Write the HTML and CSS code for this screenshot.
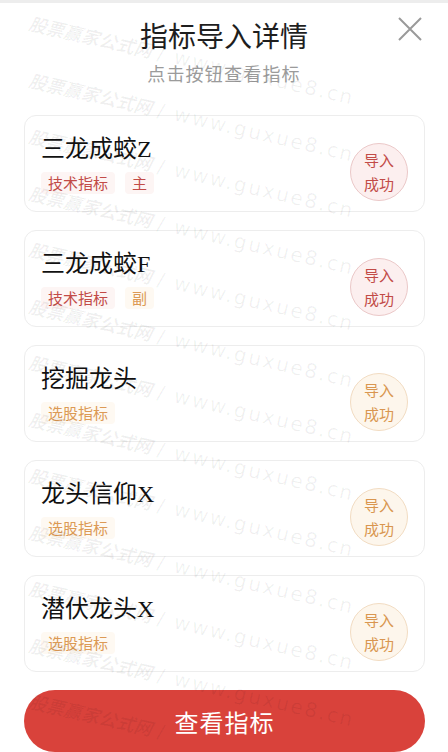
FILE: index.html
```html
<!DOCTYPE html>
<html lang="zh">
<head>
<meta charset="utf-8">
<title>指标导入详情</title>
<link rel="stylesheet" href="styles.css">
</head>
<body>
<div class="sheet">
  <header class="head">
    <h1 class="title">指标导入详情</h1>
    <p class="subtitle">点击按钮查看指标</p>
    <button class="close" aria-label="关闭">
      <svg width="24" height="24" viewBox="0 0 24 24"><path d="M1 1 L23 23 M23 1 L1 23" stroke="#9a9a9a" stroke-width="2" fill="none"/></svg>
    </button>
  </header>

  <main class="list">
    <div class="card">
      <div class="info">
        <div class="name">三龙成蛟Z</div>
        <div class="tags"><span class="tag red">技术指标</span><span class="tag red">主</span></div>
      </div>
      <div class="badge red">导入<br>成功</div>
    </div>
    <div class="card">
      <div class="info">
        <div class="name">三龙成蛟F</div>
        <div class="tags"><span class="tag red">技术指标</span><span class="tag orange">副</span></div>
      </div>
      <div class="badge red">导入<br>成功</div>
    </div>
    <div class="card">
      <div class="info">
        <div class="name">挖掘龙头</div>
        <div class="tags"><span class="tag orange">选股指标</span></div>
      </div>
      <div class="badge orange">导入<br>成功</div>
    </div>
    <div class="card">
      <div class="info">
        <div class="name">龙头信仰X</div>
        <div class="tags"><span class="tag orange">选股指标</span></div>
      </div>
      <div class="badge orange">导入<br>成功</div>
    </div>
    <div class="card">
      <div class="info">
        <div class="name">潜伏龙头X</div>
        <div class="tags"><span class="tag orange">选股指标</span></div>
      </div>
      <div class="badge orange">导入<br>成功</div>
    </div>
  </main>

  <button class="view">查看指标</button>

  <div class="watermark" aria-hidden="true">
    <div class="wm-row"><span class="wm-a">股票赢家公式网</span><span class="wm-b">/ www.guxue8.cn</span></div>
    <div class="wm-row"><span class="wm-a">股票赢家公式网</span><span class="wm-b">/ www.guxue8.cn</span></div>
    <div class="wm-row"><span class="wm-a">股票赢家公式网</span><span class="wm-b">/ www.guxue8.cn</span></div>
    <div class="wm-row"><span class="wm-a">股票赢家公式网</span><span class="wm-b">/ www.guxue8.cn</span></div>
    <div class="wm-row"><span class="wm-a">股票赢家公式网</span><span class="wm-b">/ www.guxue8.cn</span></div>
    <div class="wm-row"><span class="wm-a">股票赢家公式网</span><span class="wm-b">/ www.guxue8.cn</span></div>
    <div class="wm-row"><span class="wm-a">股票赢家公式网</span><span class="wm-b">/ www.guxue8.cn</span></div>
    <div class="wm-row"><span class="wm-a">股票赢家公式网</span><span class="wm-b">/ www.guxue8.cn</span></div>
    <div class="wm-row"><span class="wm-a">股票赢家公式网</span><span class="wm-b">/ www.guxue8.cn</span></div>
    <div class="wm-row"><span class="wm-a">股票赢家公式网</span><span class="wm-b">/ www.guxue8.cn</span></div>
    <div class="wm-row"><span class="wm-a">股票赢家公式网</span><span class="wm-b">/ www.guxue8.cn</span></div>
    <div class="wm-row"><span class="wm-a">股票赢家公式网</span><span class="wm-b">/ www.guxue8.cn</span></div>
    <div class="wm-row"><span class="wm-a">股票赢家公式网</span><span class="wm-b">/</span></div>
  </div>
</div>
</body>
</html>
```

FILE: styles.css
```css
* { box-sizing: border-box; }
html, body { margin: 0; padding: 0; }
body {
  width: 448px;
  height: 752px;
  overflow: hidden;
  background: #ededed;
  font-family: "Noto Sans CJK SC", "Noto Sans", sans-serif;
}
.sheet {
  position: relative;
  margin-top: 3px;
  height: 749px;
  background: #ffffff;
  overflow: hidden;
}
.head {
  position: relative;
  height: 112px;
  text-align: center;
}
.title {
  margin: 0;
  padding-top: 14px;
  font-size: 28px;
  line-height: 36px;
  font-weight: 400;
  color: #1e1e1e;
}
.subtitle {
  margin: 0;
  padding-top: 8px;
  font-size: 18px;
  line-height: 24px;
  letter-spacing: 1.2px;
  color: #9b9b9b;
}
.close {
  position: absolute;
  top: 14px;
  right: 26px;
  width: 24px;
  height: 24px;
  padding: 0;
  border: 0;
  background: none;
}
.list {
  display: flex;
  flex-direction: column;
  gap: 18px;
  padding: 0 23px 0 24px;
}
.card {
  display: flex;
  justify-content: space-between;
  align-items: flex-start;
  height: 97px;
  padding: 18px 16px 0 16px;
  border: 1px solid #ededed;
  border-radius: 12px;
  background: #fff;
}
.name {
  font-family: "Liberation Serif", "Noto Sans CJK SC", serif;
  font-size: 24px;
  line-height: 30px;
  color: #111;
}
.tags {
  display: flex;
  gap: 10px;
  margin-top: 8px;
}
.tag {
  font-size: 15px;
  line-height: 22px;
  padding: 0 7px;
  border-radius: 4px;
}
.tag.red { color: #c24b47; background: #fdf5f4; }
.tag.orange { color: #dc9a55; background: #fef9f2; }
.badge {
  margin-top: 9px;
  width: 58px;
  height: 58px;
  border-radius: 50%;
  display: flex;
  align-items: center;
  justify-content: center;
  text-align: center;
  font-size: 15px;
  line-height: 24px;
}
.badge.red { color: #c24b47; background: #fcefef; border: 1px solid #ebc8c8; }
.badge.orange { color: #d99650; background: #fdf6ec; border: 1px solid #f2dcc2; }
.view {
  display: block;
  margin: 18px 23px 0 24px;
  width: 401px;
  height: 62px;
  border: 0;
  border-radius: 31px;
  background: #d9423b;
  color: #fff;
  font-family: "Noto Sans CJK SC", sans-serif;
  font-size: 24px;
  letter-spacing: 1px;
}
.watermark {
  position: absolute;
  inset: 0;
  pointer-events: none;
  padding-top: 6px;
}
.wm-row {
  height: 56.5px;
  padding-left: 30px;
  transform: rotate(13deg);
  transform-origin: 30px 10px;
  white-space: nowrap;
  font-weight: 700;
  font-style: italic;
  color: rgba(0, 0, 0, 0.06);
}
.wm-a { font-size: 18px; }
.wm-b { font-size: 20px; margin-left: 6px; font-family: "DejaVu Sans", sans-serif; font-style: normal; font-weight: 400; letter-spacing: 2px; }
```
